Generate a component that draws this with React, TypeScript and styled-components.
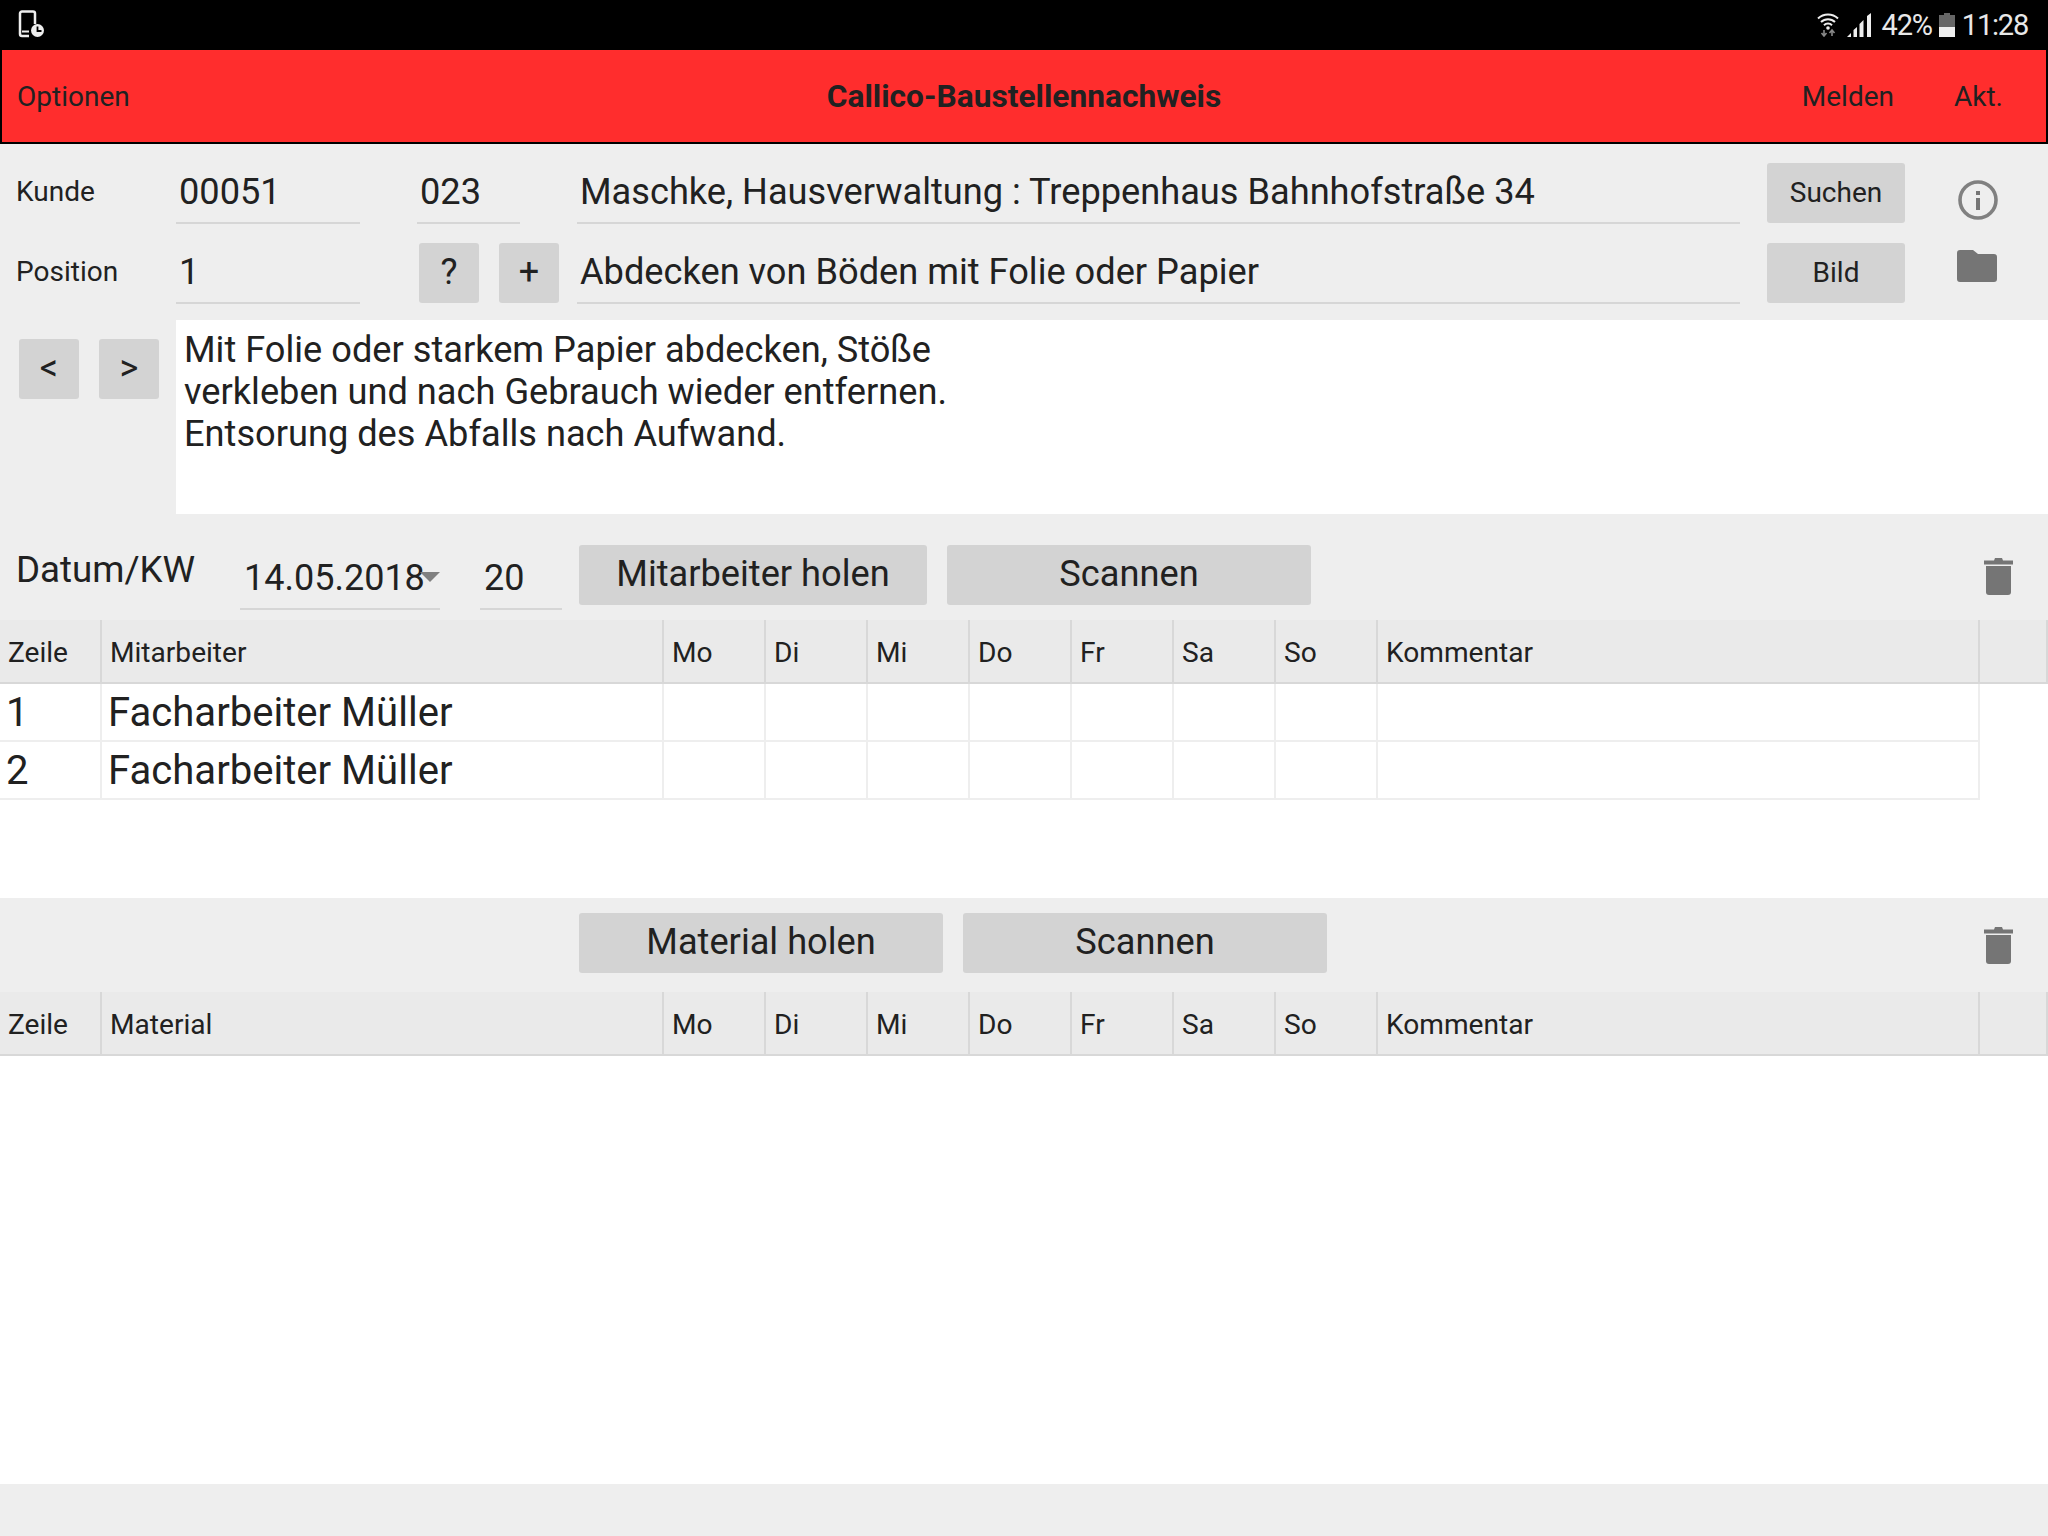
import React from 'react';
import styled, { createGlobalStyle } from 'styled-components';

const GlobalStyle = createGlobalStyle`
  html, body {
    margin: 0;
    padding: 0;
    background: #fff;
  }
  * {
    box-sizing: border-box;
  }
`;

const Page = styled.div`
  width: 2048px;
  height: 1536px;
  display: flex;
  flex-direction: column;
  overflow: hidden;
  background: #eeeeee;
  color: #212121;
  font-family: Roboto, 'Liberation Sans', sans-serif;
`;

const StatusBar = styled.div`
  height: 48px;
  flex: none;
  background: #000;
  color: #e8e8e8;
  display: flex;
  align-items: center;
  justify-content: space-between;
  padding: 0 20px 0 18px;
  font-size: 29px;
  letter-spacing: -1.2px;
`;

const StatusRight = styled.div`
  display: flex;
  align-items: center;
`;

const StatusText = styled.span<{ $left: number }>`
  margin-left: ${p => p.$left}px;
  line-height: 50px;
  padding-top: 1px;
  display: flex;
  align-items: center;
`;

const AppBar = styled.div`
  height: 96px;
  flex: none;
  background: #ff2d2d;
  border: 2px solid #000;
  display: grid;
  grid-template-columns: 1fr auto 1fr;
  align-items: center;
  font-size: 28px;
`;

const BarAction = styled.span`
  padding-left: 15px;
`;

const BarTitle = styled.span`
  font-weight: 700;
  font-size: 31.7px;
`;

const BarRight = styled.div`
  display: flex;
  align-items: center;
  justify-content: flex-end;
  gap: 60px;
  padding-right: 43px;
`;

const FormSection = styled.div`
  flex: none;
  padding-top: 19px;
  display: flex;
  flex-direction: column;
  gap: 20px;
`;

const FormRow = styled.div`
  display: grid;
  grid-template-columns: 176px 184px 217px 1163px 27px 138px 1fr;
  height: 60px;
  align-items: start;
`;

const Label = styled.div`
  height: 60px;
  padding: 0 0 3px 16px;
  font-size: 28px;
  display: flex;
  align-items: center;
`;

const Field = styled.div<{ $width?: number }>`
  width: ${p => (p.$width ? `${p.$width}px` : 'auto')};
  height: 61px;
  border-bottom: 2px solid #d6d6d6;
  font-size: 36.2px;
  padding: 0 0 2px 3px;
  display: flex;
  align-items: center;
  white-space: nowrap;
`;

const MiddleCell = styled.div<{ $indent: number }>`
  display: flex;
  gap: 20px;
  padding-left: ${p => p.$indent}px;
`;

const Spacer = styled.div``;

const FlatButton = styled.div<{ $width: number; $size?: number }>`
  width: ${p => p.$width}px;
  height: 60px;
  flex: none;
  background: #d3d3d3;
  border-radius: 3px;
  display: flex;
  align-items: center;
  justify-content: center;
  font-size: ${p => p.$size || 28}px;
  padding-bottom: 2px;
`;

const ToolButton = styled(FlatButton)`
  font-size: 36.2px;
  padding-bottom: 4px;
`;

const IconCell = styled.div<{ $top: number; $left: number }>`
  padding-left: ${p => p.$left}px;
  padding-top: ${p => p.$top}px;
  line-height: 0;
`;

const DescriptionRow = styled.div`
  flex: none;
  margin-top: 17px;
  height: 194px;
  display: flex;
`;

const NavCell = styled.div`
  width: 176px;
  flex: none;
  display: flex;
  gap: 20px;
  padding: 19px 0 0 19px;
`;

const Description = styled.div`
  flex: 1;
  background: #fff;
  font-size: 36.2px;
  line-height: 42px;
  padding: 9px 8px;
  white-space: pre-line;
`;

const Toolbar = styled.div<{ $height: number; $top: number }>`
  flex: none;
  height: ${p => p.$height}px;
  padding-top: ${p => p.$top}px;
  display: flex;
  align-items: flex-start;
  position: relative;
`;

const DateLabel = styled.div`
  width: 240px;
  padding-left: 16px;
  font-size: 36.7px;
  line-height: 50px;
`;

const DateField = styled.div<{ $width: number; $pad: number }>`
  position: relative;
  width: ${p => p.$width}px;
  height: 65px;
  border-bottom: 2px solid #d6d6d6;
  font-size: 36px;
  line-height: 66px;
  padding-left: ${p => p.$pad}px;
  flex: none;
`;

const DropArrow = styled.span`
  position: absolute;
  right: 0;
  top: 27px;
  width: 0;
  height: 0;
  border-left: 10px solid transparent;
  border-right: 10px solid transparent;
  border-top: 10px solid #808080;
`;

const KwField = styled(DateField)`
  margin-left: 40px;
`;

const ToolButtons = styled.div<{ $left: number }>`
  display: flex;
  gap: 20px;
  margin-left: ${p => p.$left}px;
`;

const TrashSlot = styled.div<{ $top: number }>`
  margin-left: auto;
  padding: ${p => p.$top}px 35px 0 0;
  line-height: 0;
`;

const COLUMNS = '102px 562px repeat(7, 102px) 602px 68px';

const HeaderRow = styled.div`
  flex: none;
  height: 64px;
  display: grid;
  grid-template-columns: ${COLUMNS};
  background: #eaeaea;
  border-bottom: 2px solid #d8d8d8;
`;

const HeaderCell = styled.div`
  border-right: 2px solid #d8d8d8;
  font-size: 28.1px;
  padding: 2px 0 0 8px;
  display: flex;
  align-items: center;
`;

const ListBody = styled.div<{ $grow?: boolean }>`
  background: #fff;
  height: ${p => (p.$grow ? '428px' : '214px')};
  flex: none;
`;

const DataRow = styled.div`
  height: 58px;
  display: grid;
  grid-template-columns: ${COLUMNS};
`;

const DataCell = styled.div`
  border-right: 2px solid #eeeeee;
  border-bottom: 2px solid #eeeeee;
  font-size: 40.1px;
  padding-left: 6px;
  display: flex;
  align-items: center;
  white-space: nowrap;
`;

const DAYS = ['Mo', 'Di', 'Mi', 'Do', 'Fr', 'Sa', 'So'];

const TabletClockIcon = () => (
  <svg width="27" height="28" viewBox="0 0 27 28">
    <path d="M4 1.500h11a2 2 0 0 1 2 2V14M11 26H4a2 2 0 0 1-2-2V3.500a2 2 0 0 1 2-2" fill="none" stroke="#eee" strokeWidth="2.5" />
    <path d="M4 21.500h7" stroke="#eee" strokeWidth="2" />
    <circle cx="19.500" cy="20.500" r="6.500" fill="#eee" />
    <path d="M19.500 16.500v4.500h4" fill="none" stroke="#000" strokeWidth="1.800" />
  </svg>
);

const WifiIcon = () => (
  <svg width="22" height="25" viewBox="0 0 22 25">
    <path d="M1 6.500a14.500 14.500 0 0 1 20 0M4 10a10 10 0 0 1 14 0M7 13.200a5.600 5.600 0 0 1 8 0" fill="none" stroke="#eee" strokeWidth="2" />
    <circle cx="11" cy="16" r="1.800" fill="#eee" />
    <path d="M7 18v5M4.500 21l2.500 3 2.500-3" fill="none" stroke="#888" strokeWidth="1.600" />
    <path d="M15 24v-5M12.500 21l2.500-3 2.500 3" fill="none" stroke="#888" strokeWidth="1.600" />
  </svg>
);

const SignalIcon = () => (
  <svg width="24" height="24" viewBox="0 0 24 24">
    <path d="M0 24l4-4v4zM6.500 24v-7l3.500-3v10zM12.500 24V11l4-4v17zM20 24V3l4-3v24z" fill="#eee" />
  </svg>
);

const BatteryIcon = () => (
  <svg width="16" height="24" viewBox="0 0 16 24">
    <path d="M5 0h6v2h5v22H0V2h5z" fill="#666" />
    <rect x="0" y="14" width="16" height="10" fill="#eee" />
  </svg>
);

const InfoIcon = () => (
  <svg width="40" height="40" viewBox="0 0 40 40">
    <circle cx="20" cy="20" r="18" fill="none" stroke="#808080" strokeWidth="3.600" />
    <rect x="18" y="18" width="4" height="12" fill="#757575" />
    <rect x="18" y="11" width="4" height="4" fill="#757575" />
  </svg>
);

const FolderIcon = () => (
  <svg width="40" height="32" viewBox="0 0 40 32">
    <path d="M3 0h13l5 4h16a3 3 0 0 1 3 3v22a3 3 0 0 1-3 3H3a3 3 0 0 1-3-3V3a3 3 0 0 1 3-3z" fill="#757575" />
  </svg>
);

const TrashIcon = () => (
  <svg width="29" height="37" viewBox="0 0 29 37">
    <path d="M0 2.500h10l1-2.500h7l1 2.500h10v4H0z" fill="#757575" />
    <path d="M2 8h25v26a3 3 0 0 1-3 3H5a3 3 0 0 1-3-3z" fill="#757575" />
  </svg>
);

const App: React.FC = () => {
  return (
    <Page>
      <GlobalStyle />
      <StatusBar>
        <TabletClockIcon />
        <StatusRight>
          <WifiIcon />
          <StatusText $left={8}><SignalIcon /></StatusText>
          <StatusText $left={11}>42%</StatusText>
          <StatusText $left={7}><BatteryIcon /></StatusText>
          <StatusText $left={7}>11:28</StatusText>
        </StatusRight>
      </StatusBar>

      <AppBar>
        <BarAction>Optionen</BarAction>
        <BarTitle>Callico-Baustellennachweis</BarTitle>
        <BarRight>
          <span>Melden</span>
          <span>Akt.</span>
        </BarRight>
      </AppBar>

      <FormSection>
        <FormRow>
          <Label>Kunde</Label>
          <Field>00051</Field>
          <MiddleCell $indent={57}>
            <Field $width={103}>023</Field>
          </MiddleCell>
          <Field>Maschke, Hausverwaltung : Treppenhaus Bahnhofstraße 34</Field>
          <Spacer />
          <FlatButton $width={138}>Suchen</FlatButton>
          <IconCell $left={53} $top={17}><InfoIcon /></IconCell>
        </FormRow>
        <FormRow>
          <Label>Position</Label>
          <Field>1</Field>
          <MiddleCell $indent={59}>
            <FlatButton $width={60} $size={36}>?</FlatButton>
            <FlatButton $width={60} $size={36}>+</FlatButton>
          </MiddleCell>
          <Field>Abdecken von Böden mit Folie oder Papier</Field>
          <Spacer />
          <FlatButton $width={138}>Bild</FlatButton>
          <IconCell $left={52} $top={7}><FolderIcon /></IconCell>
        </FormRow>
      </FormSection>

      <DescriptionRow>
        <NavCell>
          <FlatButton $width={60} $size={36}>&lt;</FlatButton>
          <FlatButton $width={60} $size={36}>&gt;</FlatButton>
        </NavCell>
        <Description>
          {'Mit Folie oder starkem Papier abdecken, Stöße\nverkleben und nach Gebrauch wieder entfernen.\nEntsorung des Abfalls nach Aufwand.'}
        </Description>
      </DescriptionRow>

      <Toolbar $height={106} $top={31}>
        <DateLabel>Datum/KW</DateLabel>
        <DateField $width={200} $pad={4}>
          14.05.2018
          <DropArrow />
        </DateField>
        <KwField $width={82} $pad={4}>20</KwField>
        <ToolButtons $left={17}>
          <ToolButton $width={348}>Mitarbeiter holen</ToolButton>
          <ToolButton $width={364}>Scannen</ToolButton>
        </ToolButtons>
        <TrashSlot $top={13}><TrashIcon /></TrashSlot>
      </Toolbar>

      <HeaderRow>
        <HeaderCell>Zeile</HeaderCell>
        <HeaderCell>Mitarbeiter</HeaderCell>
        {DAYS.map(day => <HeaderCell key={day}>{day}</HeaderCell>)}
        <HeaderCell>Kommentar</HeaderCell>
        <HeaderCell />
      </HeaderRow>

      <ListBody>
        {[1, 2].map(line => (
          <DataRow key={line}>
            <DataCell>{line}</DataCell>
            <DataCell>Facharbeiter Müller</DataCell>
            {DAYS.map(day => <DataCell key={day} />)}
            <DataCell />
          </DataRow>
        ))}
      </ListBody>

      <Toolbar $height={94} $top={15}>
        <ToolButtons $left={579}>
          <ToolButton $width={364}>Material holen</ToolButton>
          <ToolButton $width={364}>Scannen</ToolButton>
        </ToolButtons>
        <TrashSlot $top={14}><TrashIcon /></TrashSlot>
      </Toolbar>

      <HeaderRow>
        <HeaderCell>Zeile</HeaderCell>
        <HeaderCell>Material</HeaderCell>
        {DAYS.map(day => <HeaderCell key={day}>{day}</HeaderCell>)}
        <HeaderCell>Kommentar</HeaderCell>
        <HeaderCell />
      </HeaderRow>

      <ListBody $grow />
    </Page>
  );
};

export default App;
